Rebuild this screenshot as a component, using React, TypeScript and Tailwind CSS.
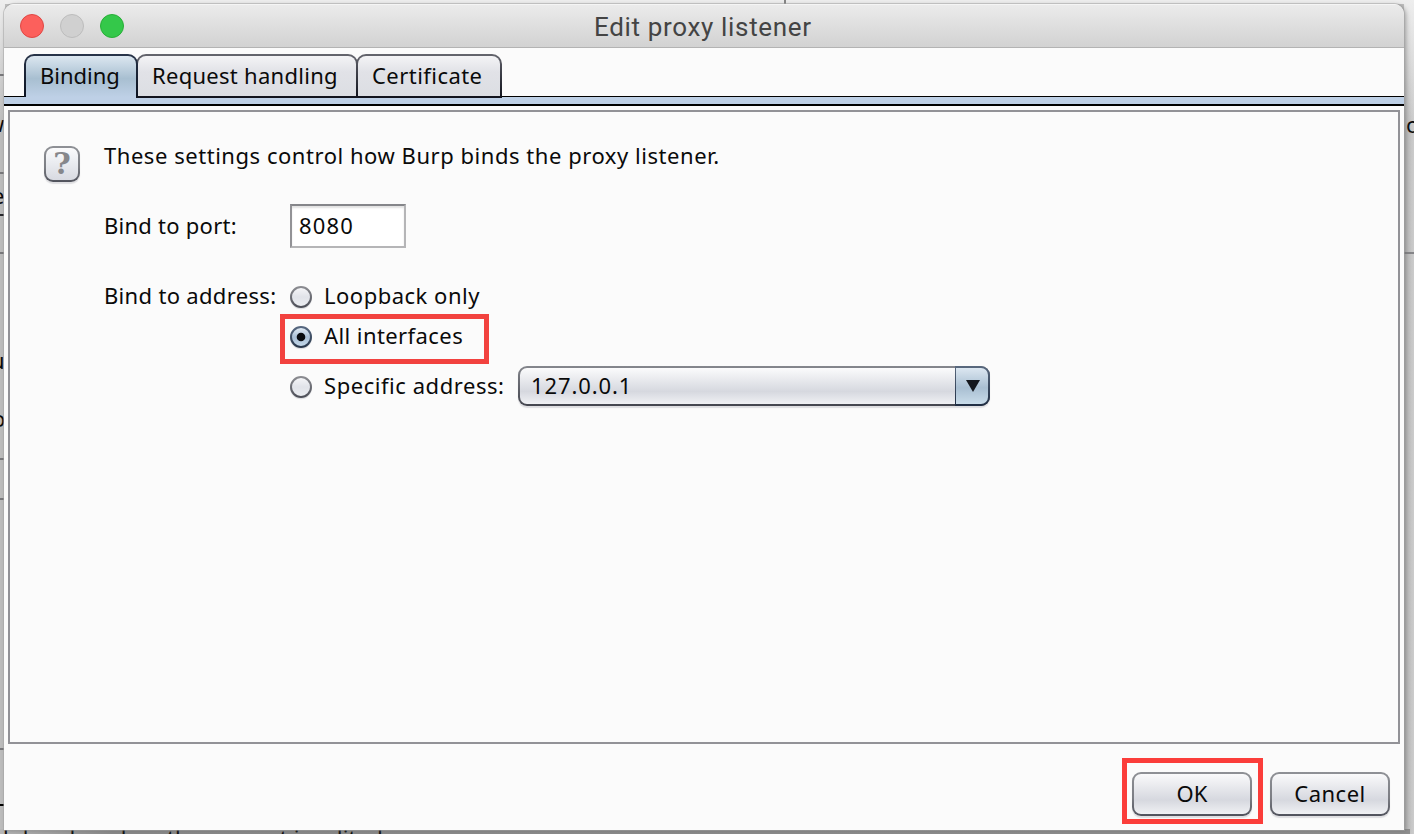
import React from "react";

const label = "whitespace-pre text-[22px] leading-[30px] text-[#0a0a0a]";
const glossy = "bg-linear-to-b from-[#fbfbfc] via-[#eceef2] via-40% to-[#d8dae1]";
const rim = "bg-linear-to-b from-[#8f9196] via-[#7b7d83] via-60% to-[#50525c]";

function Radio({ checked = false }: { checked?: boolean }) {
  return (
    <svg width="24" height="26" viewBox="0 0 24 26" className="block shrink-0" role="img" aria-label="radio">
      <defs>
        <linearGradient id={checked ? "ron" : "roff"} x1="0" y1="0" x2="0" y2="1">
          <stop offset="0" stopColor={checked ? "#e8f0f8" : "#f7f7f9"} />
          <stop offset="0.5" stopColor={checked ? "#a9bfd6" : "#e1e3e9"} />
          <stop offset="1" stopColor={checked ? "#c5d9ea" : "#eceef2"} />
        </linearGradient>
        <linearGradient id={checked ? "rbon" : "rboff"} x1="0" y1="0" x2="0" y2="1">
          <stop offset="0" stopColor={checked ? "#56677f" : "#8b8c91"} />
          <stop offset="1" stopColor={checked ? "#27364a" : "#4d4f58"} />
        </linearGradient>
      </defs>
      <circle cx="12" cy="14.2" r="11" fill="#dfe0e3" />
      <circle cx="12" cy="13" r="10" fill={checked ? "url(#ron)" : "url(#roff)"} stroke={checked ? "url(#rbon)" : "url(#rboff)"} strokeWidth="2" />
      {checked && <circle cx="12" cy="13" r="4.3" fill="#090b10" />}
    </svg>
  );
}

function Tab({ text, box, inner }: { text: string; box: string; inner: string }) {
  return (
    <div className={`h-[44px] rounded-t-[10px] bg-linear-to-b from-[#65666e] to-[#10121c] p-[2px] ${box}`}>
      <div className={`h-[40px] rounded-t-[8px] bg-linear-to-b from-[#f4f4f6] via-[#e1e2e7] via-40% to-[#dcdee3] pt-[4px] ${label} ${inner}`}>{text}</div>
    </div>
  );
}

function Button({ text, inner }: { text: string; inner: string }) {
  return (
    <button className={`h-[44px] w-[120px] rounded-[9px] p-[2px] shadow-[0_2px_1px_#dedee1] ${rim}`}>
      <span className={`block h-[40px] rounded-[7px] bg-linear-to-b from-[#fafafb] via-[#d6d8df] via-65% to-[#f0f1f4] pt-[4px] text-center ${label} ${inner}`}>{text}</span>
    </button>
  );
}

function Backdrop() {
  return (
    <div className="absolute inset-0 overflow-hidden bg-[#bebebe]">
      <div className="absolute inset-x-0 top-0 h-[4px] bg-[#eeeeee]" />
      <div className="absolute top-0 left-[784px] h-[4px] w-[2px] bg-[#858585]" />
      <div className="absolute top-0 left-0 h-[834px] w-[5px] bg-linear-to-b from-[#eeeeee] via-[#bcbcbc] via-15% to-[#bcbcbc]" />
      <div className="absolute top-0 left-[1404px] h-[834px] w-[10px] bg-linear-to-r from-[#b5b5b5] to-[#cccccc]" />
      <div className="absolute top-0 left-[1404px] h-[130px] w-[10px] bg-linear-to-b from-[#eeeeee] to-[#eeeeee]/0" />
      <div className="absolute top-[252px] left-[1404px] h-[2px] w-[10px] bg-[#858588]" />
      {[74, 172, 252, 458, 498, 748].map((y) => (
        <div key={y} className="absolute left-0 h-[2px] w-[5px] bg-[#77777a]" style={{ top: y }} />
      ))}
      <div className="absolute top-[214px] left-0 h-[2px] w-[5px] bg-[#26262c]" />
      <div className="absolute top-[804px] left-0 h-[2px] w-[5px] bg-black" />
      <div className={`absolute top-[108px] left-[-13px] ${label}`}>w</div>
      <div className={`absolute top-[180px] left-[-8px] ${label}`}>e</div>
      <div className={`absolute top-[345px] left-[-9px] ${label}`}>u</div>
      <div className={`absolute top-[403px] left-[-8px] ${label}`}>o</div>
      <div className={`absolute top-[109px] left-[1406px] ${label}`}>o</div>
      <div className="absolute top-[829px] left-0 h-[5px] w-[1410px] bg-linear-to-r from-[#b8b8b8] via-[#8b8b8b] via-8% to-[#8f8f8f]" />
      <div className={`absolute top-[822px] right-[1031px] tracking-[0.2px] ${label}`}>gth header when the request is edited</div>
    </div>
  );
}

export default function App() {
  return (
    <div className="relative h-[834px] w-[1414px] overflow-hidden font-['Noto_Sans',sans-serif]">
      <Backdrop />
      <div className="relative pt-[4px] pl-[4px]">
        <main className="flex h-[826px] w-[1400px] flex-col overflow-hidden rounded-t-[10px] bg-[#fbfbfb] shadow-[0_0_0_1px_#a4a4a480,2px_1px_4px_#6668]">
          <header className="flex h-[44px] shrink-0 items-center border-t border-b border-t-[#f5f5f5] border-b-[#b3b3b3] bg-linear-to-b from-[#ebebeb] to-[#d2d2d2] pl-[16px]">
            <div className="flex w-[104px] gap-[16px]">
              <i className="h-[24px] w-[24px] rounded-full border border-[#df4744] bg-[#fc605c]" />
              <i className="h-[24px] w-[24px] rounded-full border border-[#bcbcbc] bg-[#d0d0d0]" />
              <i className="h-[24px] w-[24px] rounded-full border border-[#28ae37] bg-[#34c84a]" />
            </div>
            <h1 className="mt-[2px] ml-[470px] font-[Roboto] text-[26px] leading-[32px] tracking-[0.66px] whitespace-nowrap text-[#444444]">Edit proxy listener</h1>
          </header>

          <div className="relative flex h-[58px] shrink-0 flex-col justify-end">
            <div className="h-[10px] border-t border-b-2 border-black bg-[#bed0e6]" />
            <div className="absolute top-[6px] left-[20px] flex">
              <div className="relative z-10 h-[43px] w-[114px] rounded-t-[10px] bg-linear-to-b from-[#283449] to-[#0b1220] px-[2px] pt-[2px]">
                <div className={`h-[41px] rounded-t-[8px] bg-linear-to-b from-[#dce7f0] via-[#a8bfd1] via-55% to-[#bed0e6] pt-[4px] pl-[14px] tracking-[0px] ${label}`}>Binding</div>
              </div>
              <Tab text="Request handling" box="-ml-[2px] w-[222px]" inner="pl-[14px] tracking-[0.28px]" />
              <Tab text="Certificate" box="-ml-[2px] w-[146px]" inner="pl-[14px] tracking-[0.45px]" />
            </div>
          </div>

          <section className="mx-[4px] mt-[4px] h-[634px] shrink-0 border-2 border-[#929297] pt-[29px] pl-[34px]">
            <div className="flex">
              <div className={`mt-[5px] h-[36px] w-[36px] rounded-[9px] p-[2px] shadow-[0_2px_1px_#dedee1] ${rim}`}>
                <div className={`flex h-[32px] items-center justify-center rounded-[7px] font-['DejaVu_Serif',serif] text-[30px] leading-[32px] font-bold text-[#86878b] ${glossy}`}>?</div>
              </div>
              <p className={`-mt-px ml-[24px] tracking-[0.54px] ${label}`}>These settings control how Burp binds the proxy listener.</p>
            </div>
            <div className="mt-[22px] ml-[60px] flex h-[44px] items-center">
              <span className={`-mt-[2px] w-[186px] tracking-[0.25px] ${label}`}>Bind to port:</span>
              <div className={`h-[44px] w-[116px] border-2 border-t-[#85868a] border-r-[#b5b5b7] border-b-[#b5b5b7] border-l-[#929296] bg-white pt-[4px] pl-[7px] shadow-[inset_0_2px_2px_#e2e2e2] tracking-[1.2px] ${label}`}>8080</div>
            </div>
            <div className="mt-[34px] ml-[60px] flex">
              <span className={`-mt-[2px] w-[185px] tracking-[0.32px] ${label}`}>Bind to address:</span>
              <div className="flex flex-col">
                <div className="flex h-[30px] items-center">
                  <Radio />
                  <span className={`-mt-[4px] ml-[11px] tracking-[0.5px] ${label}`}>Loopback only</span>
                </div>
                <div className="mt-[2px] -ml-[9px] flex h-[50px] w-[209px] items-start border-5 border-[#f2423f] pt-[3px] pl-[4px]">
                  <div className="flex h-[30px] items-center">
                    <Radio checked />
                    <span className={`-mt-[4px] ml-[11px] tracking-[0.42px] ${label}`}>All interfaces</span>
                  </div>
                </div>
                <div className="mt-[2px] flex h-[40px] items-center">
                  <div className="mt-[2px]"><Radio /></div>
                  <span className={`-mt-[2px] ml-[11px] w-[194px] tracking-[0.55px] ${label}`}>Specific address:</span>
                  <div className="flex h-[40px] w-[472px] rounded-[9px] bg-linear-to-b from-[#85878d] to-[#44464f] p-[2px] shadow-[0_2px_1px_#dedee1]">
                    <div className={`h-[36px] flex-1 rounded-l-[7px] bg-linear-to-b from-[#fbfbfc] via-[#d6d8df] via-65% to-[#f0f1f4] pt-[2px] pl-[11px] tracking-[0.9px] ${label}`}>127.0.0.1</div>
                    <div className="-my-[2px] -mr-[2px] flex w-[35px] rounded-r-[9px] bg-linear-to-b from-[#59697e] to-[#202e43] py-[2px] pr-[2px] pl-[1px]">
                      <div className="flex h-[36px] flex-1 items-center justify-center rounded-r-[7px] bg-linear-to-b from-[#dce7f1] via-[#a9bfd2] via-55% to-[#c9dcea] pl-[2px]">
                        <svg width="14" height="12" viewBox="0 0 14 12" className="block"><path d="M0 0H14L7 12Z" fill="#14171d" /></svg>
                      </div>
                    </div>
                  </div>
                </div>
              </div>
            </div>
          </section>

          <footer className="mt-[14px] flex shrink-0 pl-[1118px]">
            <div className="h-[66px] w-[141px] border-5 border-[#fb3d3a] pt-[9px] pl-[5px]">
              <Button text="OK" inner="tracking-[0px]" />
            </div>
            <div className="mt-[14px] ml-[7px]">
              <Button text="Cancel" inner="tracking-[0.5px]" />
            </div>
          </footer>
        </main>
      </div>
    </div>
  );
}
